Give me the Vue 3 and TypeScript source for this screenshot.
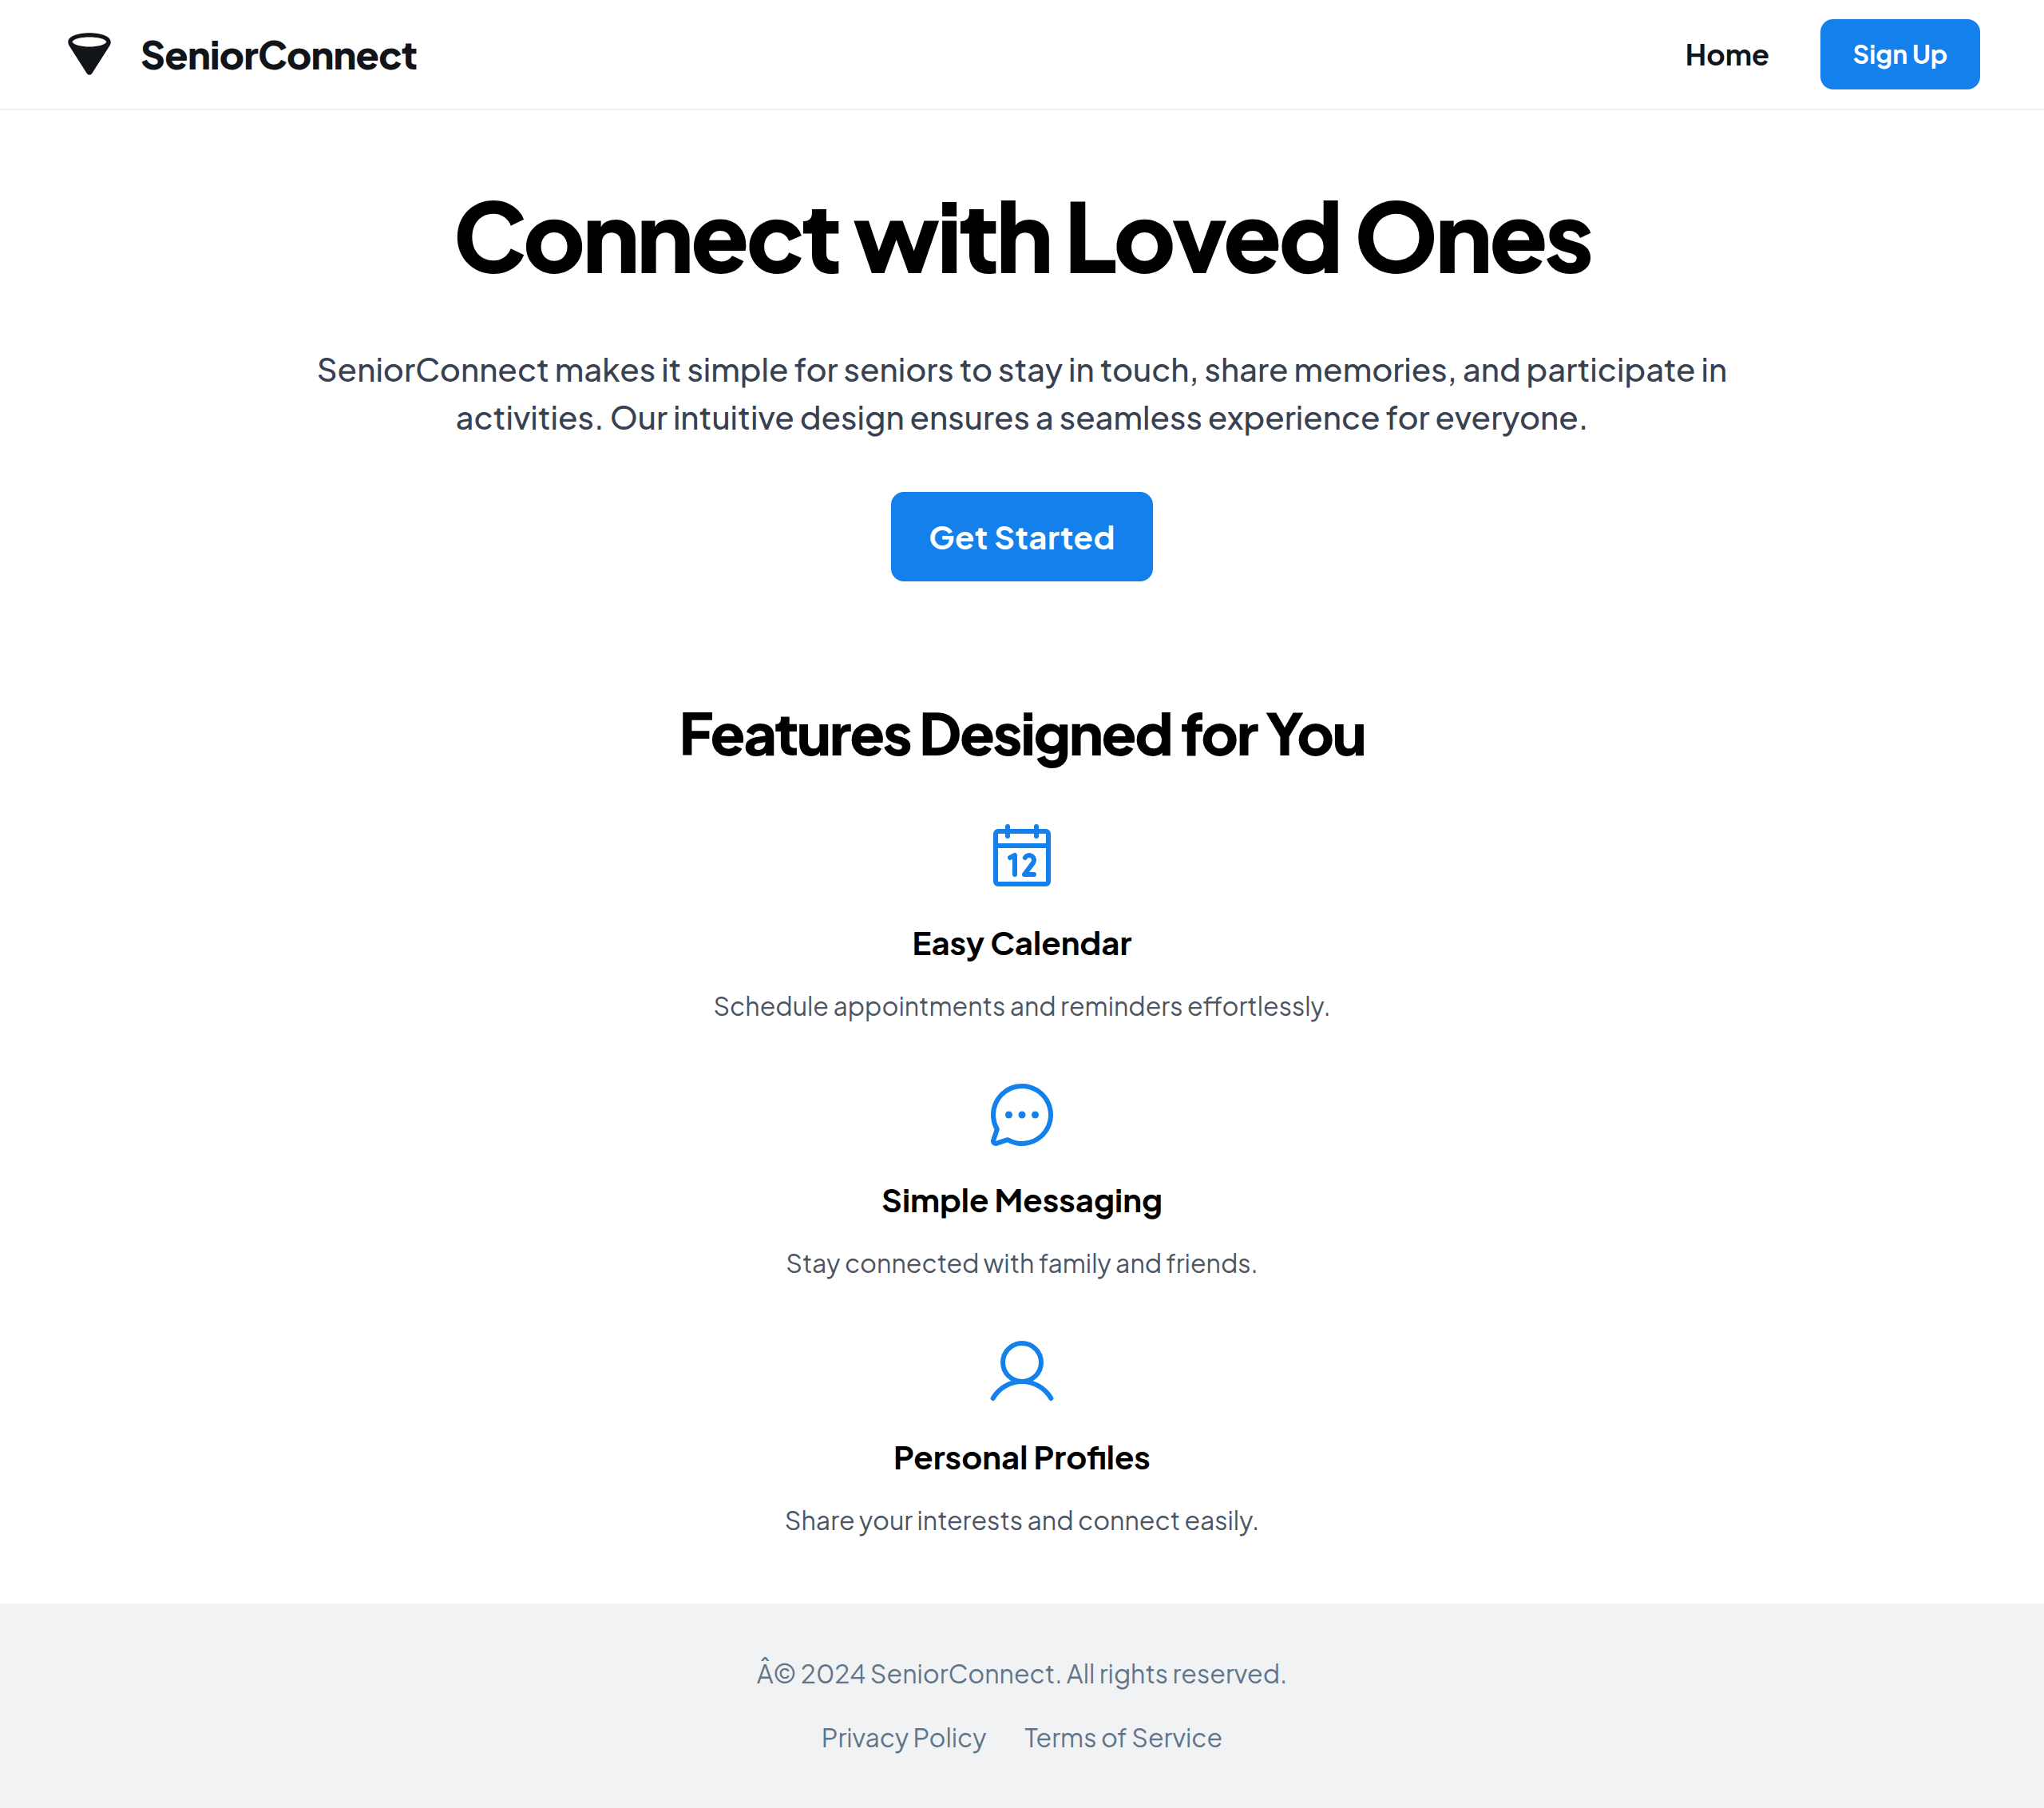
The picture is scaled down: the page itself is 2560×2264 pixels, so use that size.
<script setup lang="ts">
interface Feature {
  icon: 'calendar' | 'chat' | 'user'
  title: string
  text: string
}

const features: Feature[] = [
  { icon: 'calendar', title: 'Easy Calendar', text: 'Schedule appointments and reminders effortlessly.' },
  { icon: 'chat', title: 'Simple Messaging', text: 'Stay connected with family and friends.' },
  { icon: 'user', title: 'Personal Profiles', text: 'Share your interests and connect easily.' },
]
</script>

<template>
  <div class="page">
    <header class="header">
      <div class="brand">
        <svg class="logo" viewBox="0 0 64 64" aria-hidden="true">
          <path
            fill-rule="evenodd"
            d="M5.3 16.4C5.3 9.6 17.5 5.3 32 5.3S58.7 9.6 58.7 16.4C58.7 18.6 58 20.2 57 21.8L35.2 55.9Q32 59.8 28.8 55.9L7 21.8C6 20.2 5.3 18.6 5.3 16.4ZM10.4 16.4C12.5 20.2 21.5 22.4 32 22.4S51.5 20.2 53.4 16.4C51.5 12.7 42.5 10.6 32 10.6S12.5 12.7 10.4 16.4Z"
          />
        </svg>
        <span class="brand-name">SeniorConnect</span>
      </div>
      <nav class="nav">
        <a class="nav-link" href="#">Home</a>
        <button class="button" type="button">Sign Up</button>
      </nav>
    </header>

    <main class="main">
      <section class="hero">
        <h1>Connect with Loved Ones</h1>
        <p>
          SeniorConnect makes it simple for seniors to stay in touch, share memories, and participate in
          activities. Our intuitive design ensures a seamless experience for everyone.
        </p>
        <button class="button button-large" type="button">Get Started</button>
      </section>

      <section class="features">
        <h2>Features Designed for You</h2>
        <ul class="feature-list">
          <li v-for="feature in features" :key="feature.title" class="feature">
            <svg class="icon" viewBox="0 0 256 256" aria-hidden="true">
              <g v-if="feature.icon === 'calendar'">
                <rect x="40" y="40" width="176" height="176" rx="8" />
                <path d="M176 24v32M80 24v32M40 88h176" />
                <path d="M88 128l16-8v64M138.140 128a16 16 0 1 1 26.640 17.630L136 184h32" />
              </g>
              <g v-else-if="feature.icon === 'chat'">
                <path d="M79.930 211.110a96 96 0 1 0-35-35L32.420 213.460a8 8 0 0 0 10.120 10.120Z" />
                <g class="dots">
                  <circle cx="84" cy="128" r="12" />
                  <circle cx="128" cy="128" r="12" />
                  <circle cx="172" cy="128" r="12" />
                </g>
              </g>
              <g v-else>
                <circle cx="128" cy="96" r="64" />
                <path d="M31 216a112 112 0 0 1 194 0" />
              </g>
            </svg>
            <h3>{{ feature.title }}</h3>
            <p>{{ feature.text }}</p>
          </li>
        </ul>
      </section>
    </main>

    <footer class="footer">
      <p>Â© 2024 SeniorConnect. All rights reserved.</p>
      <div class="footer-links">
        <a href="#">Privacy Policy</a>
        <a href="#">Terms of Service</a>
      </div>
    </footer>
  </div>
</template>

<style>
body {
  margin: 0;
  background: #ffffff;
}
</style>

<style scoped>
.page {
  font-family: "Plus Jakarta Sans", Lato, "Noto Sans", sans-serif;
  color: #000000;
}

h1,
h2,
h3,
p,
ul {
  margin: 0;
  padding: 0;
}

a {
  color: inherit;
  text-decoration: none;
}

.header {
  display: flex;
  align-items: center;
  justify-content: space-between;
  padding: 24px 80px;
  border-bottom: 2px solid #f1f1f2;
  color: #111418;
}

.brand {
  display: flex;
  align-items: center;
  gap: 32px;
}

.logo {
  width: 64px;
  height: 64px;
  fill: #111418;
}

.brand-name {
  font-size: 48px;
  line-height: 64px;
  font-weight: 800;
  letter-spacing: -0.015em;
}

.nav {
  display: flex;
  align-items: center;
  gap: 64px;
}

.nav-link {
  font-size: 36px;
  line-height: 48px;
  font-weight: 700;
}

.button {
  min-width: 200px;
  height: 88px;
  padding: 0 40px 2px;
  border: 0;
  border-radius: 16px;
  background: #1480ec;
  color: #ffffff;
  font-family: inherit;
  font-size: 32px;
  font-weight: 700;
}

.button-large {
  min-width: 328px;
  height: 112px;
  font-size: 40px;
  letter-spacing: 0.01em;
}

.main {
  display: flex;
  flex-direction: column;
  align-items: center;
  padding: 80px 64px;
  text-align: center;
}

.hero {
  display: flex;
  flex-direction: column;
  align-items: center;
}

.hero h1 {
  font-size: 120px;
  line-height: 150px;
  font-weight: 800;
  letter-spacing: -0.033em;
}

.hero p {
  max-width: 1792px;
  margin: 64px 0;
  color: #374151;
  font-size: 40px;
  font-weight: 500;
  line-height: 60px;
}

.features {
  margin-top: 140px;
}

.features h2 {
  font-size: 72px;
  line-height: 98px;
  font-weight: 800;
  letter-spacing: -0.033em;
}

.feature-list {
  display: flex;
  flex-direction: column;
  gap: 65px;
  margin-top: 60px;
  padding-bottom: 1px;
  list-style: none;
}

.feature {
  display: flex;
  flex-direction: column;
  align-items: center;
}

.icon {
  width: 96px;
  height: 96px;
  fill: none;
  stroke: #1480ec;
  stroke-width: 16;
  stroke-linecap: round;
  stroke-linejoin: round;
}

.dots {
  fill: #1480ec;
  stroke: none;
}

.feature h3 {
  margin: 31px 0 28px;
  font-size: 40px;
  line-height: 54px;
  font-weight: 700;
}

.feature p {
  color: #4b5563;
  font-size: 32px;
  line-height: 48px;
}

.footer {
  display: flex;
  flex-direction: column;
  align-items: center;
  gap: 32px;
  padding: 63px 64px 65px;
  background: #f0f2f4;
  color: #60758a;
  font-size: 32px;
  line-height: 48px;
}

.footer-links {
  display: flex;
  gap: 48px;
}
</style>
